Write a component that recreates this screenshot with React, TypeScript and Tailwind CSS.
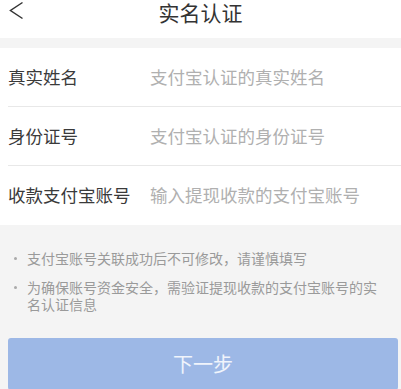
import React from "react";

const rows = [
  { label: "真实姓名", ph: "支付宝认证的真实姓名" },
  { label: "身份证号", ph: "支付宝认证的身份证号" },
  { label: "收款支付宝账号", ph: "输入提现收款的支付宝账号" },
];

const notes = [
  "支付宝账号关联成功后不可修改，请谨慎填写",
  "为确保账号资金安全，需验证提现收款的支付宝账号的实名认证信息",
];

export default function App() {
  return (
    <div
      className="w-[401px] h-[389px] overflow-hidden bg-[#f4f4f4]"
      style={{ fontFamily: '"Noto Sans CJK SC", "Noto Sans", sans-serif' }}
    >
      <div className="relative h-[38px] bg-white flex justify-center pt-[1px]">
        <svg
          className="absolute left-[8px] top-[1px]"
          width="18"
          height="19"
          viewBox="0 0 18 19"
          fill="none"
        >
          <path d="M14.5 1.5 L2.5 9.5 L14.5 17.5" stroke="#333" strokeWidth="1.5" />
        </svg>
        <span className="text-[21px] leading-[22px] text-[#333]">实名认证</span>
      </div>
      <div className="mt-[10px] bg-white pl-2">
        {rows.map((r, i) => (
          <div
            key={r.label}
            className={`flex items-center h-[59px] ${i < 2 ? "border-b border-[#e8e8e8]" : ""}`}
          >
            <div className="w-[142px] text-[17.5px] text-[#3a3a3a]">{r.label}</div>
            <div className="text-[17.5px] text-[#b0b0b0]">{r.ph}</div>
          </div>
        ))}
      </div>
      <div className="pt-[25px] pl-[14px] pr-3 flex flex-col gap-[12px] text-[14px] leading-[17px] text-[#9a9a9a]">
        {notes.map((n) => (
          <div key={n} className="flex">
            <span className="w-[13px] shrink-0 flex items-start pt-[7px]">
              <span className="block w-[3px] h-[3px] rounded-full bg-[#aaa]" />
            </span>
            <span>{n}</span>
          </div>
        ))}
      </div>
      <div className="ml-2 w-[390px] mt-[25px] h-[52px] rounded-[3px] bg-[#9db8e6] flex items-center justify-center text-[20px] text-white/85">
        下一步
      </div>
    </div>
  );
}
